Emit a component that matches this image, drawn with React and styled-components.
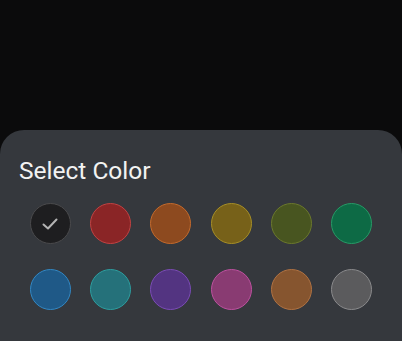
import React from 'react';
import styled, { createGlobalStyle } from 'styled-components';

const GlobalStyle = createGlobalStyle`
  html, body {
    margin: 0;
    padding: 0;
    background: #0b0b0c;
    font-family: Roboto, "Noto Sans", sans-serif;
  }
`

const Screen = styled.div`
  width: 402px;
  height: 341px;
  display: flex;
  flex-direction: column;
  justify-content: flex-end;
  overflow: hidden;
`

const Sheet = styled.div`
  height: 211px;
  background: #35383d;
  border-radius: 24px 24px 0 0;
  padding: 27px 20px 0 20px;
  box-sizing: border-box;
`

const Title = styled.div`
  color: #f2f2f2;
  font-size: 24.5px;
  line-height: 28px;
  margin-left: -1px;
`

const Palette = styled.div`
  margin-top: 18px;
  display: grid;
  grid-template-columns: repeat(6, 1fr);
  row-gap: 25px;
  justify-items: center;
`

const Swatch = styled.div`
  width: 41px;
  height: 41px;
  box-sizing: border-box;
  border-radius: 50%;
  background: ${p => p.fill};
  border: 1px solid ${p => p.edge};
  display: flex;
  align-items: center;
  justify-content: center;
`

const colors = [
  { fill: '#1e1e20', edge: '#4a4a4c', selected: true },
  { fill: '#8a2526', edge: '#c24242' },
  { fill: '#8d4a1f', edge: '#c46a2c' },
  { fill: '#776119', edge: '#a68e26' },
  { fill: '#485520', edge: '#6b782c' },
  { fill: '#0d6a45', edge: '#269a66' },
  { fill: '#1f5987', edge: '#3288c4' },
  { fill: '#25717a', edge: '#2d9ea0' },
  { fill: '#533481', edge: '#7b4cb6' },
  { fill: '#893b72', edge: '#bd519f' },
  { fill: '#86552f', edge: '#b07243' },
  { fill: '#5b5b5d', edge: '#8a8a8c' },
];

const Check = () => (
  <svg width="18" height="18" viewBox="0 0 18 18">
    <path d="M2.5 9.5 L7 13.5 L15.5 4.5" fill="none" stroke="#b4b4b4" strokeWidth="2" strokeLinecap="round" strokeLinejoin="round" />
  </svg>
);

const App = () => (
  <Screen>
    <GlobalStyle />
    <Sheet>
      <Title>Select Color</Title>
      <Palette>
        {colors.map((c, i) => (
          <Swatch key={i} fill={c.fill} edge={c.edge}>
            {c.selected && <Check />}
          </Swatch>
        ))}
      </Palette>
    </Sheet>
  </Screen>
);

export default App;
